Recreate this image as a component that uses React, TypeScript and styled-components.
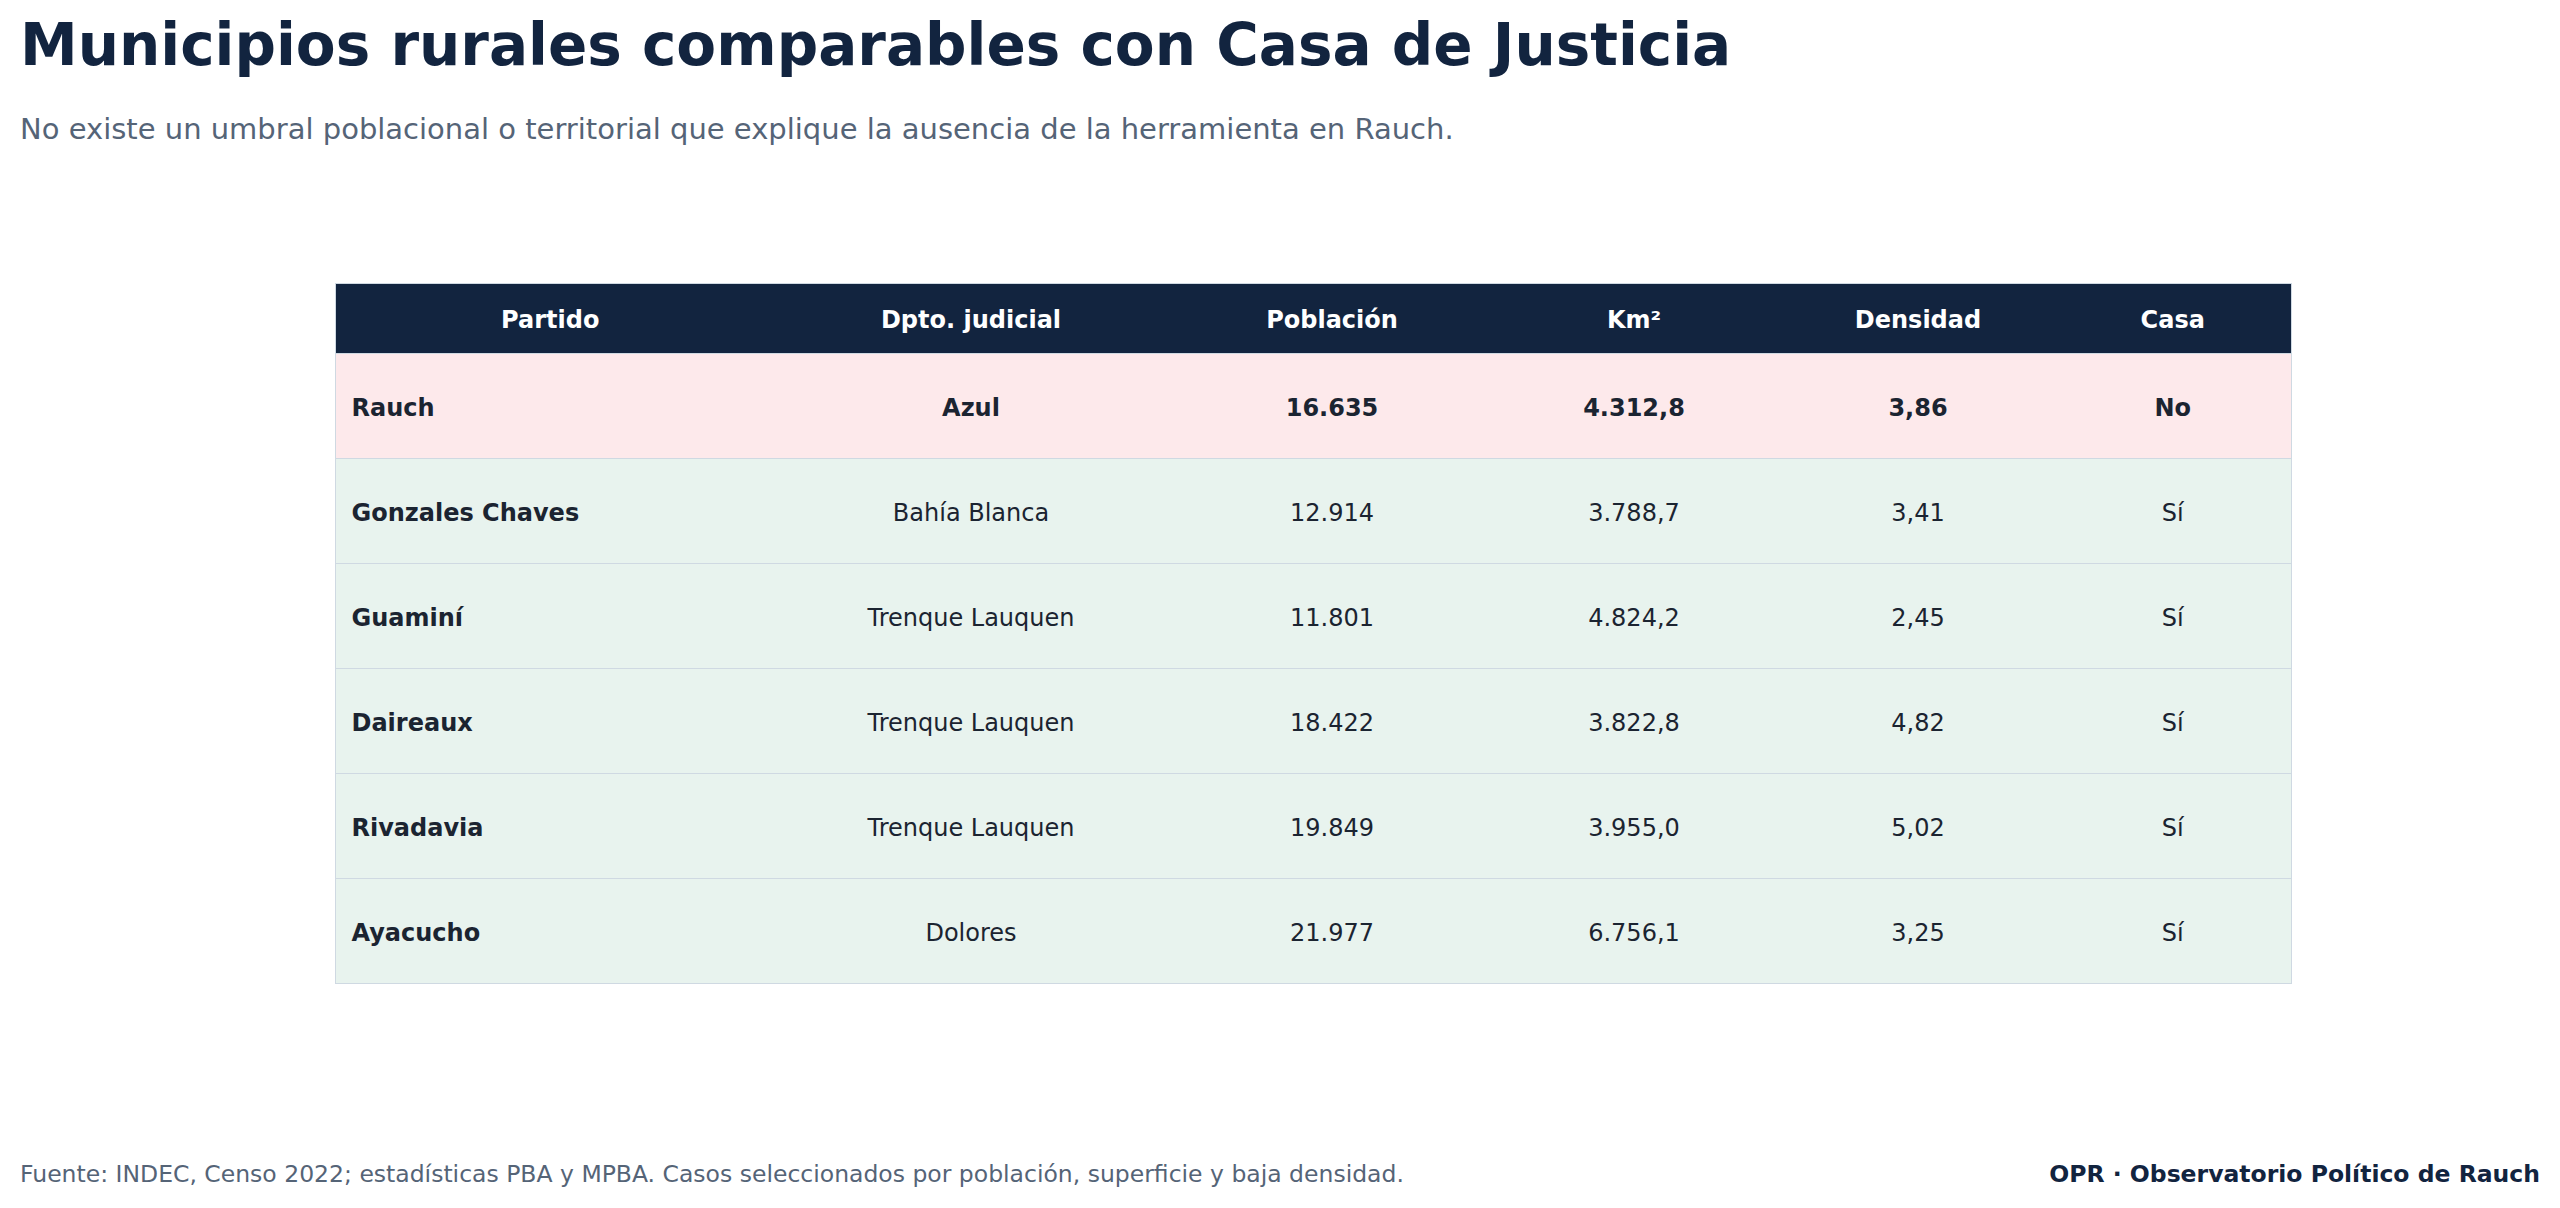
import React from 'react';
import styled, { createGlobalStyle } from 'styled-components';

const GlobalStyle = createGlobalStyle`
  html, body {
    margin: 0;
    padding: 0;
    background: #ffffff;
  }
  body {
    font-family: "DejaVu Sans", "Noto Sans", sans-serif;
  }
  * {
    box-sizing: border-box;
  }
`;

type Row = {
  partido: string;
  dpto: string;
  poblacion: string;
  km2: string;
  densidad: string;
  casa: string;
  highlight?: boolean;
};

const rows: Row[] = [
  { partido: 'Rauch', dpto: 'Azul', poblacion: '16.635', km2: '4.312,8', densidad: '3,86', casa: 'No', highlight: true },
  { partido: 'Gonzales Chaves', dpto: 'Bahía Blanca', poblacion: '12.914', km2: '3.788,7', densidad: '3,41', casa: 'Sí' },
  { partido: 'Guaminí', dpto: 'Trenque Lauquen', poblacion: '11.801', km2: '4.824,2', densidad: '2,45', casa: 'Sí' },
  { partido: 'Daireaux', dpto: 'Trenque Lauquen', poblacion: '18.422', km2: '3.822,8', densidad: '4,82', casa: 'Sí' },
  { partido: 'Rivadavia', dpto: 'Trenque Lauquen', poblacion: '19.849', km2: '3.955,0', densidad: '5,02', casa: 'Sí' },
  { partido: 'Ayacucho', dpto: 'Dolores', poblacion: '21.977', km2: '6.756,1', densidad: '3,25', casa: 'Sí' },
];

const columns = [
  { label: 'Partido', width: 430 },
  { label: 'Dpto. judicial', width: 412 },
  { label: 'Población', width: 310 },
  { label: 'Km²', width: 294 },
  { label: 'Densidad', width: 274 },
  { label: 'Casa', width: 236 },
];

const Page = styled.div`
  min-height: 100vh;
  display: flex;
  flex-direction: column;
  padding: 12px 20px 17px;
`;

const Title = styled.h1`
  margin: 0;
  font-size: 58px;
  line-height: 1.15;
  font-weight: 700;
  color: #12243f;
`;

const Subtitle = styled.p`
  margin: 30px 0 0;
  font-size: 29px;
  line-height: 1.4;
  color: #556477;
`;

const TableWrap = styled.div`
  display: flex;
  justify-content: center;
  padding: 134px 0 0 66px;
`;

const Table = styled.table`
  width: 1956px;
  table-layout: fixed;
  border-collapse: collapse;
  border: 1px solid #cfd9e2;
  font-size: 24px;
`;

const HeadCell = styled.th`
  height: 70px;
  padding: 3px 16px 0;
  background: #12243f;
  color: #ffffff;
  font-weight: 700;
  text-align: center;
  border: 1px solid #cfd9e2;
  border-left: none;
  border-right: none;
`;

const BodyRow = styled.tr<{ $highlight?: boolean }>`
  background: ${(p) => (p.$highlight ? '#fde9eb' : '#e8f3ee')};
  border-top: 1px solid #cfd9e2;
`;

const Cell = styled.td<{ $bold?: boolean; $left?: boolean }>`
  height: 105px;
  padding: 3px 16px 0;
  color: #1b2431;
  font-weight: ${(p) => (p.$bold ? 700 : 400)};
  text-align: ${(p) => (p.$left ? 'left' : 'center')};
`;

const Footer = styled.footer`
  margin-top: auto;
  display: flex;
  justify-content: space-between;
  align-items: baseline;
  font-size: 23.5px;
  line-height: 1.4;
`;

const Source = styled.span`
  color: #556477;
`;

const Brand = styled.span`
  color: #12243f;
  font-weight: 700;
`;

export default function App() {
  return (
    <>
      <GlobalStyle />
      <Page>
        <Title>Municipios rurales comparables con Casa de Justicia</Title>
        <Subtitle>
          No existe un umbral poblacional o territorial que explique la ausencia de la herramienta en Rauch.
        </Subtitle>
        <TableWrap>
          <Table>
            <colgroup>
              {columns.map((c) => (
                <col key={c.label} style={{ width: c.width }} />
              ))}
            </colgroup>
            <thead>
              <tr>
                {columns.map((c) => (
                  <HeadCell key={c.label}>{c.label}</HeadCell>
                ))}
              </tr>
            </thead>
            <tbody>
              {rows.map((r) => (
                <BodyRow key={r.partido} $highlight={r.highlight}>
                  <Cell $bold $left>{r.partido}</Cell>
                  <Cell $bold={r.highlight}>{r.dpto}</Cell>
                  <Cell $bold={r.highlight}>{r.poblacion}</Cell>
                  <Cell $bold={r.highlight}>{r.km2}</Cell>
                  <Cell $bold={r.highlight}>{r.densidad}</Cell>
                  <Cell $bold={r.highlight}>{r.casa}</Cell>
                </BodyRow>
              ))}
            </tbody>
          </Table>
        </TableWrap>
        <Footer>
          <Source>
            Fuente: INDEC, Censo 2022; estadísticas PBA y MPBA. Casos seleccionados por población, superficie y baja densidad.
          </Source>
          <Brand>OPR · Observatorio Político de Rauch</Brand>
        </Footer>
      </Page>
    </>
  );
}
